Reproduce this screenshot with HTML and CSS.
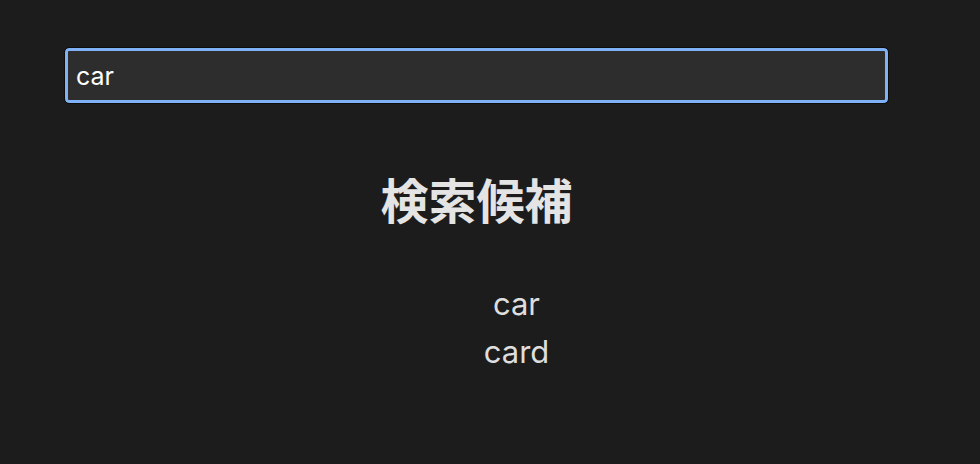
FILE: index.html
```html
<!DOCTYPE html>
<html lang="ja">
<head>
<meta charset="utf-8">
<title>検索候補</title>
<link rel="stylesheet" href="styles.css">
</head>
<body>
<main class="page">
  <input class="search" type="text" value="car">
  <h1 class="title">検索候補</h1>
  <ul class="suggestions">
    <li class="suggestion">car</li>
    <li class="suggestion">card</li>
  </ul>
</main>
</body>
</html>
```
FILE: styles.css
```css
html, body {
  margin: 0;
  background: #1c1c1c;
}
body {
  font-family: Inter, "Noto Sans CJK JP", sans-serif;
  color: #e2e2e2;
}
.page {
  padding: 47px 91px 0 64px;
}
.search {
  display: block;
  box-sizing: border-box;
  width: 100%;
  height: 57px;
  margin: 0;
  padding: 0 11px;
  font-family: Inter, "Noto Sans CJK JP", sans-serif;
  font-size: 25px;
  color: #ffffff;
  background: #2d2d2d;
  border: 1px solid #0d0d0d;
  border-radius: 5px;
  box-shadow: inset 0 0 0 3px #7fb1f6;
  outline: none;
}
.title {
  margin: 66px 0 0;
  font-family: "Noto Sans CJK JP", sans-serif;
  font-size: 48px;
  font-weight: 700;
  line-height: 1.2;
  text-align: center;
  color: #e4e4e4;
}
.suggestions {
  list-style: none;
  margin: 52px 0 0;
  padding: 0 0 0 80px;
  text-align: center;
  font-size: 31px;
  line-height: 48px;
  color: #dedede;
}
```
